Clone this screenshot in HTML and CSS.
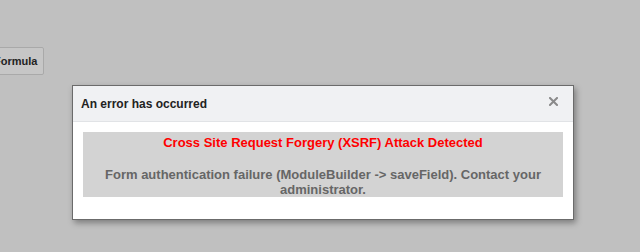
FILE: index.html
```html
<!doctype html>
<html lang="en">
	<head>
		<meta charset="UTF-8" />
		<meta name="viewport" content="width=device-width, initial-scale=1.0" />
		<title>Module Builder</title>
		<link rel="stylesheet" href="styles.css">
	</head>
	<body>
		<div class="toolbar">
			<button type="button" class="btn">Formula</button>
		</div>

		<div class="dialog" role="dialog" aria-labelledby="dialogTitle">
			<div class="dialog-header">
				<span id="dialogTitle" class="dialog-title">An error has occurred</span>
				<span class="dialog-close" title="Close">
					<svg width="9" height="9" viewBox="0 0 9 9">
						<path d="M1 1 L8 8 M8 1 L1 8" stroke="#8a8a8a" stroke-width="2" stroke-linecap="square" fill="none"/>
					</svg>
				</span>
			</div>
			<div class="dialog-body">
				<div class="message">
					<div class="message-title">Cross Site Request Forgery (XSRF) Attack Detected</div>
					<div class="message-text">Form authentication failure (ModuleBuilder -&gt; saveField). Contact your administrator.</div>
				</div>
			</div>
		</div>
	</body>
</html>
```

FILE: styles.css
```css
body {
	margin: 0;
	background: #c0c0c0;
	font-family: "Liberation Sans", Arial, sans-serif;
	height: 252px;
	overflow: hidden;
}
.toolbar {
	padding-top: 47px;
}
.btn {
	margin-left: -15px;
	height: 28px;
	padding: 0 6px 0 8px;
	background: #c6c6c6;
	border: 1px solid #a9a9a9;
	border-radius: 2px;
	font-family: inherit;
	font-size: 11px;
	font-weight: bold;
	color: #222;
}
.dialog {
	position: absolute;
	left: 72px;
	top: 85px;
	width: 500px;
	background: #fff;
	border: 1px solid #6b6b6b;
	box-shadow: 2px 3px 6px rgba(0, 0, 0, 0.35);
}
.dialog-header {
	display: flex;
	align-items: center;
	justify-content: space-between;
	height: 35px;
	padding: 0 15px 0 8px;
	background: #f0f1f3;
	border-bottom: 1px solid #e1e3e6;
}
.dialog-title {
	font-size: 12px;
	font-weight: bold;
	color: #222;
	padding-top: 1px;
}
.dialog-close {
	display: flex;
	margin-top: -4px;
}
.dialog-body {
	padding: 10px 10px 22px;
}
.message {
	background: #d3d3d3;
	padding: 3px 20px 0;
	text-align: center;
	font-size: 13px;
	font-weight: bold;
	line-height: 15px;
}
.message-title {
	color: #ff0000;
	margin-bottom: 17px;
}
.message-text {
	color: #666;
}
```
